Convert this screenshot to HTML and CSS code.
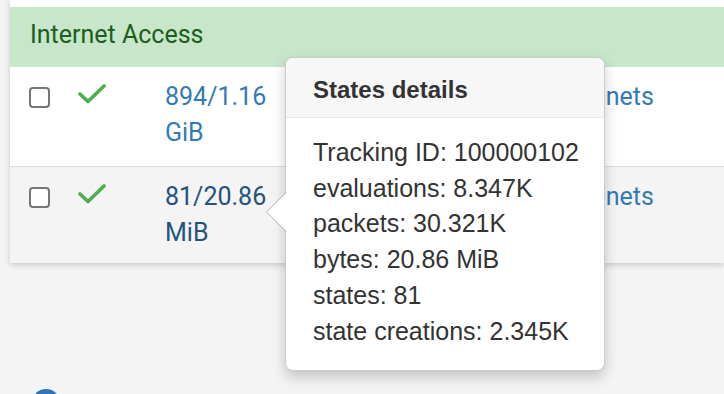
FILE: index.html
```html
<!DOCTYPE html>
<html lang="en">
<head>
    <meta charset="UTF-8">
    <title>Firewall rules</title>
    <link rel="stylesheet" href="styles.css">
</head>
<body>
    <div class="panel">
        <div class="top-strip"></div>
        <div class="group-row">Internet Access</div>

        <div class="rule-row">
            <div class="cell-check"><span class="checkbox"></span></div>
            <div class="cell-status">
                <svg width="28" height="20" viewBox="0 0 28 20"><path d="M2 10 L10 17.5 L26 2" fill="none" stroke="#4cae4f" stroke-width="3.6" stroke-linecap="round" stroke-linejoin="round"/></svg>
            </div>
            <div class="cell-states"><a href="#">894/1.16 GiB</a></div>
            <div class="cell-desc"><a href="#">subnets</a></div>
        </div>

        <div class="rule-row striped">
            <div class="cell-check"><span class="checkbox"></span></div>
            <div class="cell-status">
                <svg width="28" height="20" viewBox="0 0 28 20"><path d="M2 10 L10 17.5 L26 2" fill="none" stroke="#4cae4f" stroke-width="3.6" stroke-linecap="round" stroke-linejoin="round"/></svg>
            </div>
            <div class="cell-states"><a href="#" class="hover">81/20.86 MiB</a></div>
            <div class="cell-desc"><a href="#">subnets</a></div>
        </div>
    </div>

    <div class="footer">
        <div class="help-dot"></div>
    </div>

    <!-- popover shown for the hovered states link -->
    <div class="popover">
        <div class="arrow"></div>
        <h3 class="popover-title">States details</h3>
        <div class="popover-content">
            Tracking ID: 100000102<br>
            evaluations: 8.347K<br>
            packets: 30.321K<br>
            bytes: 20.86 MiB<br>
            states: 81<br>
            state creations: 2.345K
        </div>
    </div>
</body>
</html>
```

FILE: styles.css
```css
body {
    margin: 0;
    background-color: #f4f4f4;
    font-family: Roboto, "Liberation Sans", sans-serif;
    width: 724px;
    height: 394px;
    overflow: hidden;
    position: relative;
}

a {
    color: #337ab7;
    text-decoration: none;
}

    a.hover {
        color: #23527c;
    }

.panel {
    margin-left: 10px;
    width: 714px;
    background-color: white;
    box-shadow: 0 2px 6px rgba(0, 0, 0, 0.18);
    overflow: hidden;
}

.top-strip {
    height: 7px;
}

.group-row {
    height: 60px;
    padding-left: 20px;
    display: flex;
    align-items: center;
    background-color: #c8e6c9;
    color: #1b5e20;
    font-size: 25px;
    box-sizing: border-box;
    padding-bottom: 5px;
}

.rule-row {
    display: flex;
    height: 100px;
    box-sizing: border-box;
    padding-top: 12px;
    border-bottom: 1px solid #dddddd;
    font-size: 25px;
    line-height: 36px;
}

    .rule-row.striped {
        height: 96px;
        background-color: #f4f4f4;
        border-bottom: none;
    }

.cell-check {
    width: 68px;
    padding-left: 19px;
    box-sizing: border-box;
    padding-top: 8px;
}

.checkbox {
    display: block;
    width: 21px;
    height: 21px;
    box-sizing: border-box;
    border: 2px solid #767676;
    border-radius: 4px;
    background-color: white;
}

.cell-status {
    width: 87px;
    padding-top: 5px;
}

    .cell-status svg {
        display: block;
    }

.cell-states {
    width: 110px;
    flex-shrink: 0;
}

.cell-desc {
    padding-left: 290px;
    white-space: nowrap;
}

.footer {
    margin-top: 126px;
    height: 5px;
    padding-left: 32px;
    overflow: hidden;
}

.help-dot {
    width: 28px;
    height: 28px;
    border-radius: 50%;
    background-color: #2d74b8;
}

.popover {
    position: absolute;
    left: 285px;
    top: 57px;
    width: 320px;
    box-sizing: border-box;
    background-color: white;
    border: 1px solid rgba(0, 0, 0, 0.2);
    border-radius: 8px;
    box-shadow: 0 6px 14px rgba(0, 0, 0, 0.2);
    font-family: "Liberation Sans", Arial, sans-serif;
    color: #333333;
}

    .popover .arrow {
        position: absolute;
        left: -20px;
        top: 134px;
        width: 0;
        height: 0;
        border-style: solid;
        border-width: 20px 20px 20px 0;
        border-color: transparent rgba(0, 0, 0, 0.25) transparent transparent;
    }

        .popover .arrow::after {
            content: "";
            position: absolute;
            left: 1px;
            top: -19px;
            border-style: solid;
            border-width: 19px 19px 19px 0;
            border-color: transparent white transparent transparent;
        }

.popover-title {
    margin: 0;
    height: 60px;
    box-sizing: border-box;
    padding: 18px 27px 0;
    font-size: 24px;
    font-weight: bold;
    background-color: #f7f7f7;
    border-bottom: 1px solid #ebebeb;
    border-radius: 7px 7px 0 0;
}

.popover-content {
    padding: 17px 20px 21px 27px;
    font-size: 25px;
    line-height: 35.7px;
    white-space: nowrap;
}
```
